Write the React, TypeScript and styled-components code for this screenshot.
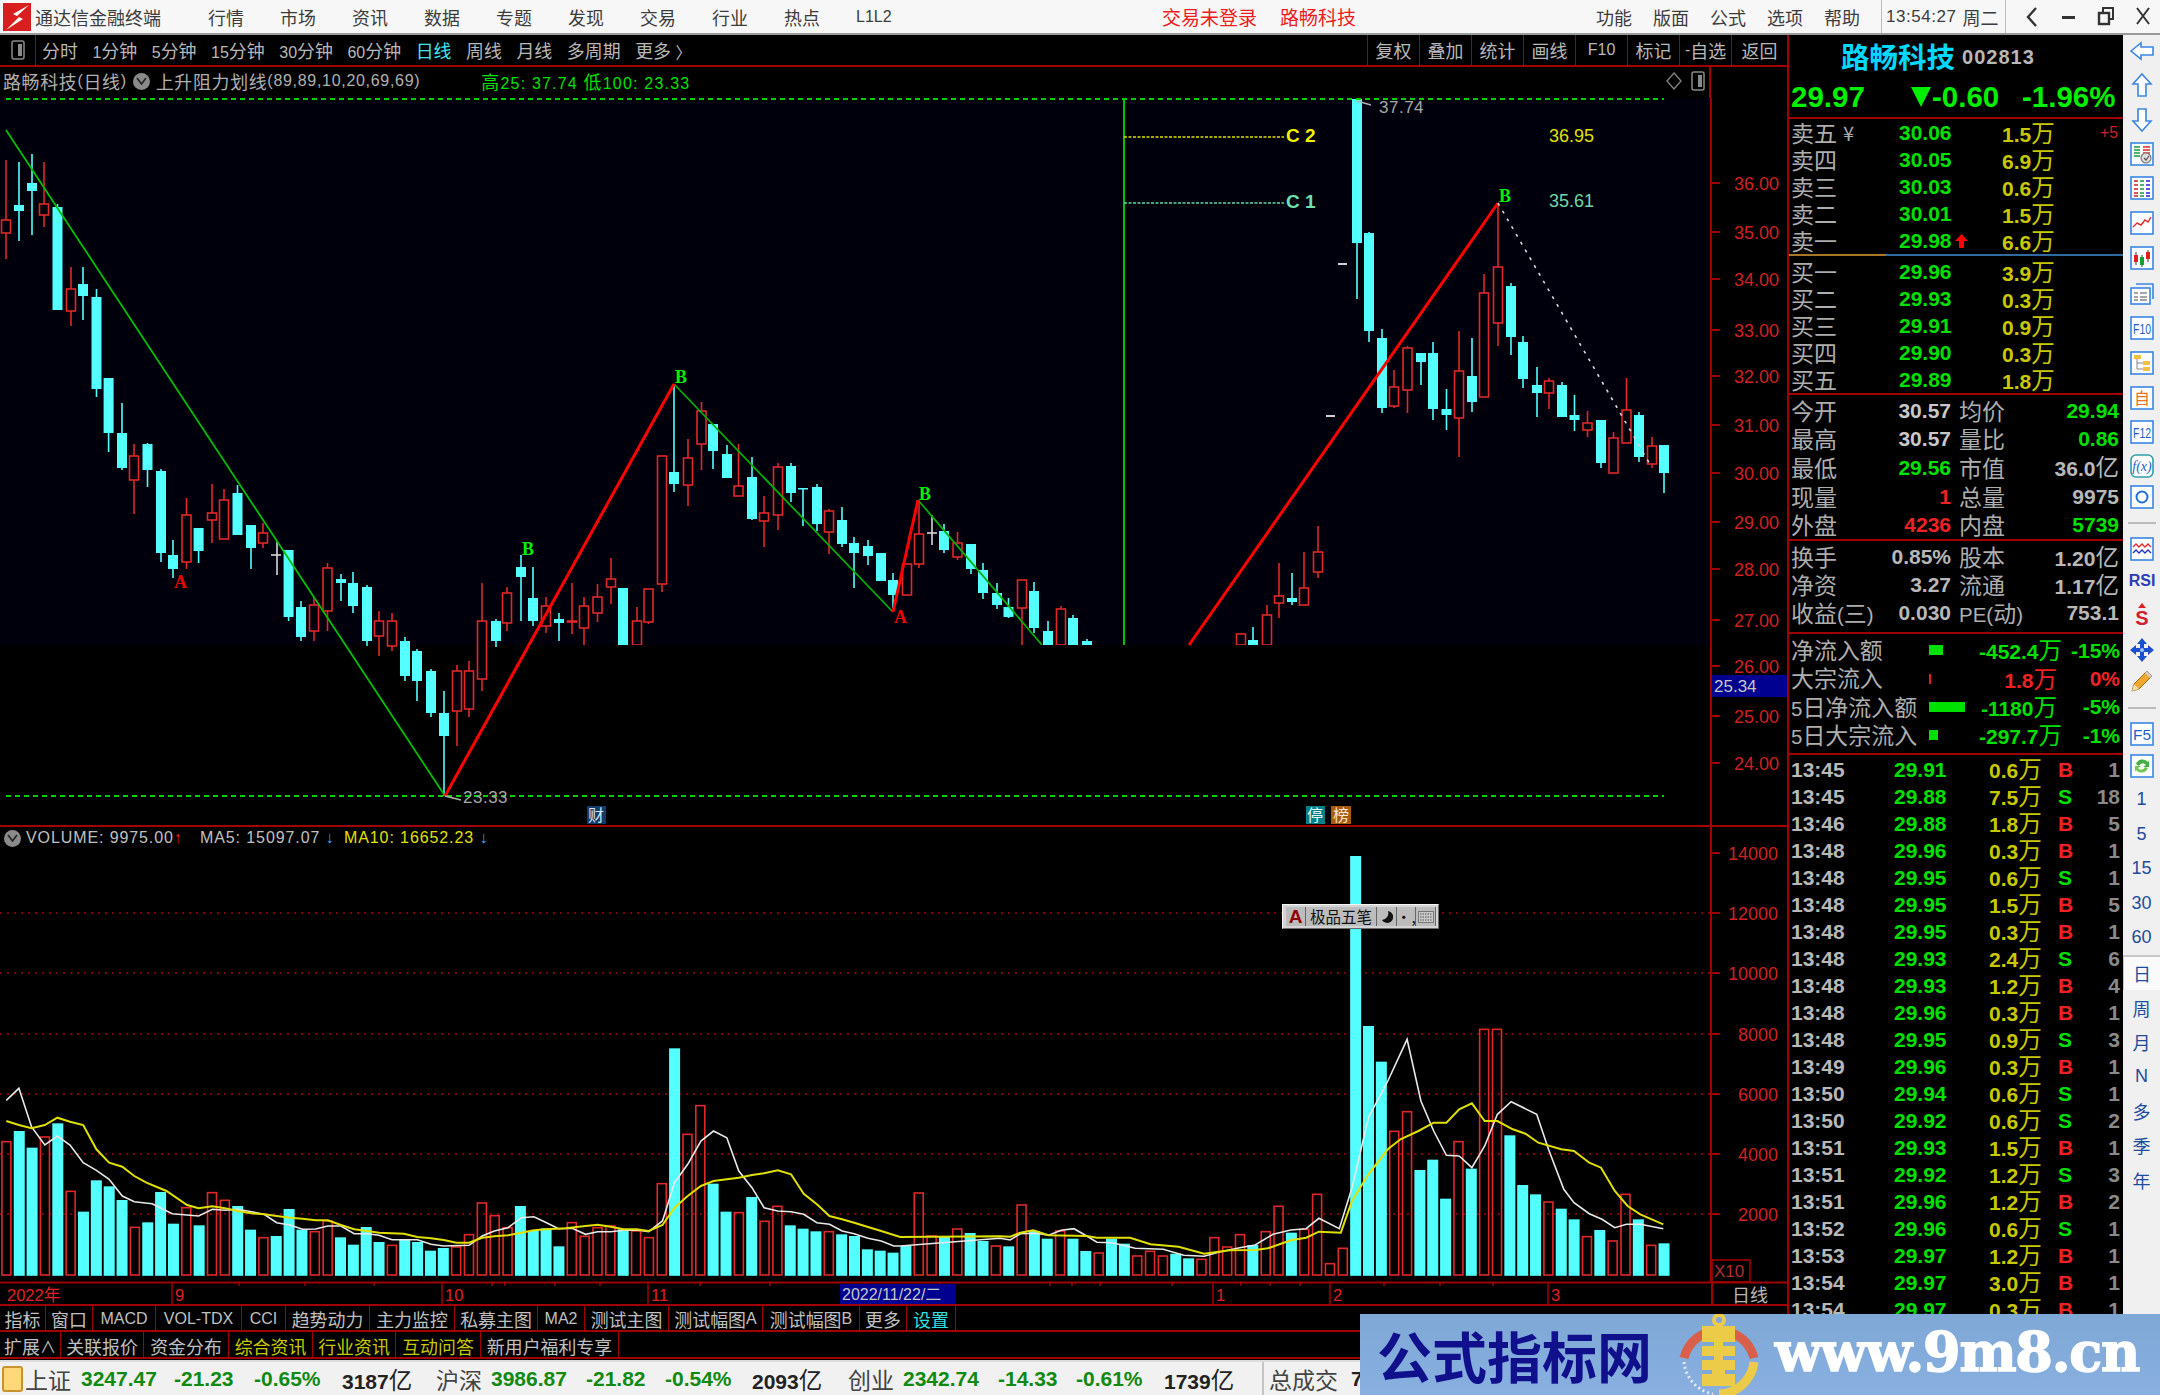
import React from "react";
import styled, { createGlobalStyle } from "styled-components";

const SANS = `"Liberation Sans", "Noto Sans CJK SC", sans-serif`;
const CJK = `"Noto Sans CJK SC", "Liberation Sans", sans-serif`;
const LINE = "#a00000";

const Global = createGlobalStyle`
  html, body { margin: 0; padding: 0; background: #000; }
  * { box-sizing: border-box; }
`;

const Root = styled.div`
  position: relative;
  width: 2160px;
  height: 1395px;
  overflow: hidden;
  background: #000;
  font-family: ${SANS};
  display: flex;
  flex-direction: column;
`;

const CjkSpan = styled.span`
  font-family: ${CJK};
  font-size: 1.12em;
  font-weight: 400;
`;

const Mix = ({ t }: { t: string }) => (
  <>
    {t.split(/([\u3000-\u9fff]+)/).map((p, i) =>
      /[\u3000-\u9fff]/.test(p) ? <CjkSpan key={i}>{p}</CjkSpan> : <span key={i}>{p}</span>
    )}
  </>
);

/* ---------- title bar ---------- */
const TitleBar = styled.div`
  height: 35px;
  flex: none;
  display: flex;
  align-items: center;
  background: #f7f7f7;
  border-bottom: 2px solid #9a9a9a;
  color: #3c3c3c;
  font-size: 16px;
`;
const LogoBox = styled.div`
  width: 35px;
  height: 33px;
  flex: none;
  display: flex;
  align-items: center;
  padding-left: 3px;
`;
const AppName = styled.div`
  width: 173px;
  font-family: ${CJK};
  font-size: 18px;
  flex: none;
`;
const MenuItem = styled.div`
  width: 72px;
  flex: none;
  white-space: nowrap;
`;
const AlertText = styled.div<{ $ml: number; $w: number }>`
  margin-left: ${(p) => p.$ml}px;
  width: ${(p) => p.$w}px;
  flex: none;
  color: #ee1c1c;
  font-family: ${CJK};
  font-size: 19px;
  white-space: nowrap;
`;
const RightMenu = styled.div`
  width: 57px;
  flex: none;
  font-family: ${CJK};
  font-size: 18px;
`;
const ClockCell = styled.div`
  width: 125px;
  height: 33px;
  flex: none;
  display: flex;
  align-items: center;
  gap: 6px;
  padding-left: 4px;
  border-left: 1px solid #bdbdbd;
  border-right: 1px solid #bdbdbd;
  font-size: 17px;
  letter-spacing: 0.55px;
  white-space: nowrap;
`;
const ClockDay = styled.span`
  font-family: ${CJK};
  font-size: 18px;
  letter-spacing: 0;
`;
const WinGroup = styled.div`
  display: flex;
  margin-left: 7px;
`;
const WinBtn = styled.div`
  width: 37px;
  flex: none;
  display: flex;
  justify-content: center;
`;

/* ---------- body ---------- */
const Body = styled.div`
  flex: none;
  height: 1325px;
  display: flex;
`;
const MainCol = styled.div`
  position: relative;
  width: 1787px;
  flex: none;
  display: flex;
  flex-direction: column;
`;
const Toolbar = styled.div`
  height: 32px;
  flex: none;
  display: flex;
  align-items: center;
  border-bottom: 2px solid ${LINE};
  color: #b8b8b8;
  font-size: 16px;
`;
const ToolIconCell = styled.div`
  width: 36px;
  height: 30px;
  flex: none;
  display: flex;
  align-items: center;
  justify-content: center;
  border-right: 1px solid ${LINE};
  margin-right: 6px;
`;
const PeriodList = styled.div`
  display: flex;
  gap: 14.6px;
  flex: 1;
  white-space: nowrap;
`;
const Period = styled.span<{ $on?: boolean }>`
  color: ${(p) => (p.$on ? "#3fe6f2" : "#b8b8b8")};
`;
const ToolBtn = styled.div<{ $w?: number }>`
  width: ${(p) => p.$w ?? 52}px;
  height: 30px;
  flex: none;
  display: flex;
  align-items: center;
  justify-content: center;
  border-left: 1px solid ${LINE};
  white-space: nowrap;
`;
const ChartHead = styled.div`
  height: 31px;
  width: 1711px;
  flex: none;
  display: flex;
  align-items: center;
  padding: 0 0 3px 3px;
  border-right: 2px solid ${LINE};
  color: #b0b0b0;
  font-size: 16px;
  letter-spacing: 0.7px;
  white-space: nowrap;
`;
const Circle = styled.span`
  width: 17px;
  height: 17px;
  border-radius: 50%;
  background: #8a8a8a;
  margin: 0 6px 0 6px;
  display: inline-flex;
  align-items: center;
  justify-content: center;
  flex: none;
`;
const HeadGreen = styled.span`
  margin-left: 61px;
  color: #00e000;
  flex: 1;
  letter-spacing: 1.2px;
`;
const HeadIcons = styled.div`
  display: flex;
  align-items: center;
  gap: 9px;
  padding-right: 4px;
`;
const ChartSvg = styled.svg`
  display: block;
  flex: none;
  overflow: visible;
  font-family: "Liberation Sans", sans-serif;
`;
const VolHead = styled.div`
  position: absolute;
  left: 4px;
  top: 794px;
  display: flex;
  align-items: center;
  color: #c0c0c0;
  font-size: 16px;
  letter-spacing: 0.9px;
  white-space: nowrap;
`;
const VolDot = styled.span`
  width: 17px;
  height: 17px;
  border-radius: 50%;
  background: #8a8a8a;
  margin-right: 5px;
  flex: none;
  display: flex;
  align-items: center;
  justify-content: center;
`;
const VolItem = styled.span<{ $w: number; $c?: string }>`
  width: ${(p) => p.$w}px;
  color: ${(p) => p.$c ?? "#c0c0c0"};
  flex: none;
`;
const DownMark = styled.span<{ $c: string }>`
  color: ${(p) => p.$c};
  font-weight: bold;
`;
const ImeBox = styled.div`
  position: absolute;
  left: 1282px;
  top: 869px;
  width: 157px;
  height: 25px;
  display: flex;
  padding: 2px 3px;
  background: #d4d4d4;
  border: 1px solid #f4f4f4;
  border-bottom-color: #6a6a6a;
  border-right-color: #6a6a6a;
  font-family: ${CJK};
  font-size: 15.5px;
  color: #111;
`;
const ImeBtn = styled.div<{ $w: number; $c?: string }>`
  width: ${(p) => p.$w}px;
  flex: none;
  display: flex;
  align-items: center;
  justify-content: center;
  background: #bcbcbc;
  border-right: 1px solid #666;
  color: ${(p) => p.$c ?? "#111"};
  line-height: 1;
  white-space: nowrap;
`;
const ImeLetter = styled.b`
  font-family: "Liberation Sans", sans-serif;
  font-size: 19px;
  font-weight: 700;
`;
const AxisRow = styled.div`
  height: 23px;
  flex: none;
  display: flex;
  border-bottom: 2px solid ${LINE};
`;
const PeriodCell = styled.div`
  width: 76px;
  flex: none;
  display: flex;
  align-items: center;
  justify-content: center;
  border-left: 2px solid ${LINE};
  color: #b8b8b8;
  font-family: ${CJK};
  font-size: 18px;
`;
const TabRow = styled.div<{ $h: number }>`
  height: ${(p) => p.$h}px;
  flex: none;
  display: flex;
  border-bottom: 2px solid ${LINE};
  font-size: 16px;
  color: #c0c0c0;
`;
const TabCell = styled.div<{ $w: number; $c?: string }>`
  width: ${(p) => p.$w}px;
  flex: none;
  display: flex;
  align-items: center;
  justify-content: center;
  padding-top: 2px;
  border-right: 1.5px solid ${LINE};
  color: ${(p) => p.$c ?? "#c0c0c0"};
  white-space: nowrap;
`;

/* ---------- quote panel ---------- */
const Quote = styled.div`
  width: 336px;
  flex: none;
  border-left: 2px solid ${LINE};
  display: flex;
  flex-direction: column;
  overflow: hidden;
  color: #b0b0b0;
`;
const NameRow = styled.div`
  height: 41px;
  flex: none;
  display: flex;
  align-items: center;
  padding-left: 52px;
  gap: 7px;
`;
const StockName = styled.div`
  font-family: ${CJK};
  font-weight: 700;
  font-size: 28.5px;
  color: #00d8ff;
`;
const StockCode = styled.div`
  font-weight: bold;
  font-size: 20px;
  letter-spacing: 1px;
  color: #b8b8b8;
  padding-top: 4px;
`;
const PriceRow = styled.div`
  height: 43px;
  flex: none;
  display: flex;
  align-items: center;
  color: #00f000;
  font-weight: bold;
  font-size: 29.5px;
  border-bottom: 2px solid ${LINE};
  padding-left: 2px;
  white-space: nowrap;
`;
const PriceCell = styled.div<{ $w: number }>`
  width: ${(p) => p.$w}px;
  flex: none;
  display: flex;
  align-items: center;
`;
const TriDown = styled.span`
  width: 0;
  height: 0;
  border-left: 10px solid transparent;
  border-right: 10px solid transparent;
  border-top: 20px solid #00f000;
  margin-right: 1px;
`;
const OrderRow = styled.div`
  height: 27px;
  flex: none;
  display: grid;
  grid-template-columns: 108px 52px 51px 98px 18px;
  align-items: center;
  padding-left: 2px;
  white-space: nowrap;
`;
const Label = styled.span`
  font-family: ${CJK};
  font-size: 23px;
  line-height: 1;
  color: #aeaeae;
  display: inline-flex;
  align-items: center;
  white-space: nowrap;
`;
const LabelMix = styled.span`
  font-size: 20.5px;
  line-height: 1;
  color: #aeaeae;
  font-weight: 400;
  white-space: nowrap;
`;
const Yen = styled.span`
  font-size: 20px;
  margin-left: 6px;
  color: #aaa;
`;
const Num = styled.span<{ $c?: string; $right?: boolean }>`
  font-size: 21px;
  line-height: 1;
  font-weight: bold;
  color: ${(p) => p.$c ?? "#c0c0c0"};
  text-align: ${(p) => (p.$right ? "right" : "left")};
  white-space: nowrap;
`;
const ArrowWrap = styled.span`
  display: flex;
  align-items: center;
  padding-left: 4px;
`;
const Plus = styled.span`
  color: #cc2222;
  font-size: 16px;
  text-align: right;
`;
const SplitLine = styled.div`
  height: 3px;
  flex: none;
  margin-bottom: 1px;
  background: linear-gradient(to right, #a87828 0 97px, #2f6aa0 97px);
  background-size: 100% 2px;
  background-repeat: no-repeat;
`;
const Section = styled.div<{ $pt?: number; $pb?: number; $top?: boolean }>`
  flex: none;
  padding-top: ${(p) => p.$pt ?? 0}px;
  padding-bottom: ${(p) => p.$pb ?? 0}px;
  border-bottom: 2px solid ${LINE};
  border-top: ${(p) => (p.$top ? `2px solid ${LINE}` : "0")};
`;
const StatRow = styled.div<{ $h: number }>`
  height: ${(p) => p.$h}px;
  display: grid;
  grid-template-columns: 60px 100px 72px 96px;
  align-items: center;
  padding-left: 2px;
  white-space: nowrap;
`;
const Label2 = styled(Label)`
  padding-left: 8px;
`;
const LabelMix2 = styled(LabelMix)`
  padding-left: 8px;
`;
const FlowRow = styled.div`
  height: 28.4px;
  display: grid;
  grid-template-columns: 138px 50px 78px 63px;
  align-items: center;
  padding-left: 2px;
  white-space: nowrap;
`;
const FlowBar = styled.div<{ $w: number; $c: string }>`
  width: ${(p) => p.$w}px;
  height: 10px;
  background: ${(p) => p.$c};
`;
const Ticks = styled.div`
  flex: 1;
  padding-top: 1px;
  overflow: hidden;
`;
const TickRow = styled.div`
  height: 27px;
  display: grid;
  grid-template-columns: 103px 95px 69px 20px 42px;
  align-items: center;
  padding-left: 2px;
`;

/* ---------- side bar ---------- */
const Side = styled.div`
  flex: 1;
  background: #f0f0f0;
  display: flex;
  flex-direction: column;
  align-items: center;
`;
const Slot = styled.div<{ $h: number; $on?: boolean }>`
  height: ${(p) => p.$h}px;
  width: 100%;
  flex: none;
  display: flex;
  align-items: center;
  justify-content: center;
  background: ${(p) => (p.$on ? "#fafafa" : "transparent")};
  border-top: ${(p) => (p.$on ? "2px solid #c8c8c8" : "0")};
  border-left: ${(p) => (p.$on ? "1px solid #c8c8c8" : "0")};
  color: #1d4c9e;
  font-size: 18px;
  font-family: ${SANS};
`;
const SideRule = styled.div`
  width: 28px;
  height: 2px;
  background: #bcbcbc;
`;

/* ---------- status bar ---------- */
const Status = styled.div`
  flex: 1;
  display: flex;
  align-items: center;
  background: #f1f1f1;
  border-top: 2px solid #dcdcdc;
  white-space: nowrap;
`;
const StatusLamp = styled.div`
  width: 21px;
  height: 26px;
  margin: 0 2px;
  flex: none;
  border: 2px solid #c8922c;
  border-radius: 3px;
  background: #ffd87a;
`;
const StatusCell = styled.div<{ $w: number; $c?: string }>`
  width: ${(p) => p.$w}px;
  flex: none;
  font-size: 21px;
  font-weight: 700;
  color: ${(p) => p.$c ?? "#333"};
`;
const StatusLabel = styled.span`
  font-family: ${CJK};
  font-size: 23px;
  font-weight: 400;
  color: #444;
`;
const StatusDiv = styled.div`
  height: 34px;
  width: 2px;
  background: #c4c4c4;
  flex: none;
  margin-right: 5px;
`;

/* ---------- watermark ---------- */
const Mark = styled.div`
  position: absolute;
  left: 1360px;
  top: 1314px;
  width: 800px;
  height: 81px;
  background: linear-gradient(#7ea8d6, #88afe0);
  display: flex;
  align-items: center;
  overflow: hidden;
`;
const MarkTitle = styled.div`
  font-family: ${CJK};
  font-weight: 700;
  font-size: 55px;
  line-height: 1;
  color: #10108c;
  margin-left: 17px;
  width: 277px;
  flex: none;
`;
const MarkLogo = styled.svg`
  flex: none;
  margin-left: 24px;
`;
const MarkUrl = styled.div`
  font-family: "DejaVu Serif", serif;
  font-weight: 700;
  font-size: 54px;
  line-height: 1;
  letter-spacing: -1.2px;
  color: #fff;
  margin-left: 15px;
  margin-top: -6px;
  -webkit-text-stroke: 1.5px #fff;
  white-space: nowrap;
`;

/* ---------- data ---------- */
type C = ["r" | "c", number, number, number, number, number];
const CANDLES: C[] = [
  ["r", 6, 219, 232, 159, 258], ["c", 19, 204, 210, 161, 240], ["c", 32, 182, 190, 153, 234], ["r", 44, 203, 214, 161, 226],
  ["c", 57.5, 206, 309, 203, 309], ["r", 71, 288, 310, 266, 325], ["c", 83, 283, 295, 266, 319], ["c", 96.5, 296, 388, 288, 396],
  ["c", 108.6, 377, 432, 377, 451], ["c", 122, 432, 467, 402, 469], ["r", 134, 455, 479, 443, 513], ["c", 147.5, 443, 469, 442, 486],
  ["c", 161, 470, 552, 468, 561], ["c", 173, 554, 568, 539, 577], ["r", 186.5, 514, 561, 497, 568], ["c", 198.6, 527, 550, 527, 562],
  ["r", 212, 512, 519, 483, 542], ["r", 224, 499, 538, 488, 538], ["c", 237.5, 492, 534, 484, 534], ["c", 251, 524, 547, 524, 568],
  ["r", 263, 532, 542, 522, 547], ["c", 288.6, 549, 616, 549, 620], ["c", 301, 606, 636, 600, 640], ["r", 314, 604, 630, 596, 640],
  ["r", 327.5, 567, 610, 562, 630], ["c", 341, 578, 582, 573, 600], ["c", 353, 582, 605, 571, 612], ["c", 367, 586, 640, 584, 645],
  ["r", 379, 620, 635, 610, 655], ["r", 392, 620, 645, 612, 650], ["c", 405, 640, 675, 636, 680], ["c", 417, 650, 680, 648, 700],
  ["c", 431, 670, 712, 668, 716], ["c", 444, 712, 735, 690, 795], ["r", 457, 670, 710, 664, 745], ["r", 469, 670, 708, 660, 716],
  ["r", 482, 620, 678, 582, 690], ["c", 496, 620, 640, 618, 646], ["r", 507, 592, 622, 586, 630], ["c", 521, 566, 576, 554, 620],
  ["c", 533, 597, 620, 566, 625], ["r", 546, 605, 625, 596, 632], ["c", 559, 618, 622, 612, 640],
  ["r", 572, 620, 621, 582, 633], ["r", 584, 605, 627, 596, 644], ["r", 597.5, 596, 612, 583, 621], ["r", 611, 578, 586, 557, 603],
  ["c", 623, 587, 644, 587, 644], ["r", 637, 620, 644, 606, 644], ["r", 648.5, 588, 621, 588, 623], ["r", 662, 455, 583, 455, 591],
  ["c", 674, 471, 483, 383, 491], ["r", 688, 457, 484, 438, 505], ["r", 701.5, 410, 443, 401, 469], ["c", 713, 423, 450, 423, 468],
  ["c", 727, 453, 477, 444, 477], ["r", 738.5, 485, 495, 443, 495], ["c", 752, 476, 518, 456, 519], ["r", 764, 512, 520, 495, 546],
  ["r", 778, 466, 514, 462, 529], ["c", 791, 465, 492, 462, 501], ["c", 803, 487, 488, 487, 525], ["c", 817, 486, 523, 483, 530],
  ["r", 829, 510, 531, 508, 553], ["c", 842, 519, 543, 506, 546], ["c", 854, 542, 552, 536, 587], ["c", 868, 545, 555, 539, 564],
  ["c", 881, 552, 580, 552, 580], ["c", 893, 579, 594, 572, 607], ["r", 907, 563, 594, 563, 594], ["r", 919, 533, 563, 500, 567],
  ["c", 944, 530, 549, 523, 552], ["r", 957.5, 542, 556, 531, 559], ["c", 971, 543, 568, 543, 573], ["c", 983, 569, 592, 562, 598],
  ["c", 997, 592, 604, 582, 608], ["c", 1008.5, 606, 616, 597, 617], ["r", 1022, 579, 607, 579, 644], ["c", 1034, 590, 627, 581, 632],
  ["c", 1048, 630, 644, 620, 644], ["r", 1061, 608, 644, 605, 644], ["c", 1073, 617, 644, 614, 644], ["c", 1087, 640, 644, 638, 644],
  ["r", 1241, 633, 644, 633, 644], ["c", 1253, 639, 644, 626, 644], ["r", 1267, 614, 644, 604, 644], ["r", 1279, 595, 602, 562, 617],
  ["c", 1292, 597, 601, 572, 604], ["r", 1304, 587, 604, 551, 604], ["r", 1318, 551, 571, 525, 577],
  ["c", 1357, 98, 242, 98, 298], ["c", 1369, 232, 330, 231, 341], ["c", 1382, 337, 407, 328, 412], ["r", 1394, 386, 405, 369, 407],
  ["r", 1407.5, 347, 389, 345, 412], ["c", 1421, 352, 361, 352, 384], ["c", 1433, 352, 408, 341, 419], ["c", 1446.5, 408, 414, 388, 429],
  ["r", 1459, 370, 417, 330, 456], ["c", 1472, 375, 401, 337, 411], ["r", 1484, 292, 396, 273, 396], ["r", 1498, 266, 322, 202, 345],
  ["c", 1511, 285, 336, 282, 354], ["c", 1523, 341, 378, 335, 387], ["c", 1537, 384, 392, 366, 416], ["r", 1549, 380, 392, 377, 408],
  ["c", 1562, 384, 416, 381, 416], ["c", 1574.5, 414, 419, 394, 430], ["r", 1587.5, 422, 429, 410, 436], ["c", 1601, 419, 462, 419, 467],
  ["r", 1613.5, 437, 472, 431, 472], ["r", 1626.5, 409, 442, 377, 442], ["c", 1639, 414, 456, 411, 461], ["r", 1652, 445, 463, 436, 467],
  ["c", 1664, 444, 472, 444, 492],
];

const PRICE_AXIS = [
  ["36.00", 182], ["35.00", 231], ["34.00", 278], ["33.00", 329], ["32.00", 375], ["31.00", 424], ["30.00", 472],
  ["29.00", 521], ["28.00", 568], ["27.00", 619], ["26.00", 665], ["25.00", 715], ["24.00", 762],
] as [string, number][];

const V1: [string, number][] = [
  ["r", 422], ["c", 390], ["c", 440], ["r", 408], ["c", 367], ["r", 571], ["c", 632], ["c", 538], ["c", 556], ["c", 597], ["r", 679], ["c", 664], ["c", 573], ["c", 668], ["r", 620], ["c", 673], ["r", 575], ["r", 598], ["c", 615], ["c", 686], ["r", 710], ["c", 705], ["c", 624], ["c", 686], ["r", 692], ["r", 660], ["c", 709], ["c", 731], ["c", 678], ["c", 723], ["r", 733], ["c", 716], ["c", 723], ["c", 749], ["c", 741], ["r", 738], ["r", 701], ["r", 606], ["r", 644], ["r", 680], ["c", 615], ["c", 690], ["c", 682], ["c", 736], ["r", 665], ["r", 706], ["r", 680], ["r", 675], ["c", 685], ["r", 690], ["r", 710], ["r", 548], ["c", 142], ["r", 400], ["r", 314], ["c", 548], ["c", 632], ["r", 635], ["c", 588], ["r", 661], ["r", 616], ["c", 673], ["c", 683], ["c", 691], ["r", 692], ["c", 700], ["c", 705], ["c", 745], ["c", 749], ["c", 755],
];
const VFill: [string, number][] = [["c", 1245], ["r", 1192], ["r", 1235], ["c", 1235], ["r", 1228], ["c", 1232], ["c", 1240], ["r", 1245]];
const V2: [string, number][] = [
  ["c", 1276], ["r", 1152], ["c", 1230], ["c", 1253], ["r", 1230], ["c", 1253], ["c", 1290], ["r", 1296], ["c", 1253], ["c", 1268], ["r", 1305], ["r", 1291], ["r", 1305], ["c", 1298], ["c", 1312], ["r", 1315], ["r", 1250], ["r", 1278], ["r", 1241], ["c", 1272], ["r", 1232], ["r", 1156], ["c", 1235], ["r", 1225], ["r", 1120], ["r", 1328], ["r", 1282], ["c", 105], ["c", 615], ["c", 722], ["r", 931], ["r", 872], ["c", 1047], ["c", 1016], ["c", 1133], ["r", 962], ["c", 1043], ["r", 625], ["r", 625], ["c", 943], ["c", 1092], ["c", 1120], ["r", 1143], ["c", 1163], ["c", 1195], ["r", 1247], ["c", 1227], ["r", 1260], ["r", 1120], ["c", 1195], ["r", 1273], ["c", 1267],
];
const BARS: [string, number][] = [
  ...V1.map(([k, y]) => [k, 1000 + y / 3] as [string, number]),
  ...VFill,
  ...V2.map(([k, y]) => [k, 820 + y / 3] as [string, number]),
];

const W1 = [11,298,33,262,55,378,78,432,100,405,122,432,145,485,168,508,190,535,213,585,234,602,265,608,300,638,346,645,370,625,392,628,414,625,438,632,460,640,482,665,505,672,527,685,550,684,571,675,594,675,617,698,640,698,660,703,683,716,727,716,751,730,773,735,817,733,840,705,861,690,885,680,908,650,930,647,952,665,973,683,997,682,1020,700,1041,692,1064,692,1086,688,1109,687,1130,692,1154,660,1175,545,1198,490,1221,420,1243,390,1266,410,1287,510,1310,560,1331,620,1355,630,1378,632,1400,640,1423,665,1445,670,1467,690,1488,698,1512,712,1535,720,1557,735,1568,735];
const Y1 = [11,360,33,372,55,382,78,372,100,350,122,362,145,372,168,445,190,485,213,497,234,525,255,545,290,570,326,612,346,622,370,616,392,622,414,630,438,637,460,640,482,645,505,650,527,653,550,658,571,658,594,672,617,685,640,690,660,695,704,698,727,708,751,712,773,717,795,725,817,725,840,710,861,706,885,703,908,695,930,688,952,685,985,682,1020,675,1041,671,1064,677,1086,685,1109,685,1130,690,1154,672,1175,620,1198,585,1221,555,1243,540,1266,535,1287,530,1310,522,1331,517,1355,508,1378,520,1400,578,1423,610,1445,645,1467,655,1488,665,1512,678,1535,690,1568,708];
const W2 = [0,1252,20,1257,40,1238,70,1237,95,1243,120,1228,145,1223,170,1245,190,1264,220,1265,265,1282,320,1285,360,1303,400,1306,430,1293,470,1280,500,1272,535,1240,570,1227,600,1223,625,1192,665,1223,690,1100,722,890,760,780,798,655,825,840,850,930,875,1003,900,1005,925,1040,950,975,975,880,1002,842,1052,880,1075,985,1105,1105,1125,1145,1155,1178,1180,1195,1205,1220,1228,1210,1255,1210,1300,1223];
const Y2 = [0,1246,20,1247,40,1235,65,1228,95,1243,170,1245,190,1250,255,1250,295,1270,350,1277,400,1298,450,1288,500,1287,525,1282,570,1258,600,1250,625,1232,668,1235,690,1140,722,1060,760,985,785,955,820,930,850,905,875,905,900,865,925,847,950,900,975,900,1005,925,1030,938,1055,965,1100,985,1125,990,1155,1025,1178,1040,1205,1110,1230,1155,1255,1180,1300,1210];
const pts = (a: number[], sx: number, ox: number, oy: number) => {
  const r: string[] = [];
  for (let i = 0; i < a.length; i += 2) r.push(`${(ox + a[i] / sx).toFixed(1)},${(oy + a[i + 1] / 3).toFixed(1)}`);
  return r.join(" ");
};
const MA5 = pts(W1, 1.742, 0, 1000) + " " + pts(W2, 1.96, 1000, 820);
const MA10 = pts(Y1, 1.742, 0, 1000) + " " + pts(Y2, 1.96, 1000, 820);

const TICKS: [string, string, string, string, string][] = [
  ["13:45", "29.91", "0.6", "B", "1"], ["13:45", "29.88", "7.5", "S", "18"], ["13:46", "29.88", "1.8", "B", "5"],
  ["13:48", "29.96", "0.3", "B", "1"], ["13:48", "29.95", "0.6", "S", "1"], ["13:48", "29.95", "1.5", "B", "5"],
  ["13:48", "29.95", "0.3", "B", "1"], ["13:48", "29.93", "2.4", "S", "6"], ["13:48", "29.93", "1.2", "B", "4"],
  ["13:48", "29.96", "0.3", "B", "1"], ["13:48", "29.95", "0.9", "S", "3"], ["13:49", "29.96", "0.3", "B", "1"],
  ["13:50", "29.94", "0.6", "S", "1"], ["13:50", "29.92", "0.6", "S", "2"], ["13:51", "29.93", "1.5", "B", "1"],
  ["13:51", "29.92", "1.2", "S", "3"], ["13:51", "29.96", "1.2", "B", "2"], ["13:52", "29.96", "0.6", "S", "1"],
  ["13:53", "29.97", "1.2", "B", "1"], ["13:54", "29.97", "3.0", "B", "1"], ["13:54", "29.97", "0.3", "B", "1"],
];

const GREEN = "#00e000";
const YEL = "#c8c800";
const RED = "#ee2222";
const NAVY = "#00000c";

/* ---------- charts ---------- */
const PriceChart = () => (
  <ChartSvg width={1787} height={729} viewBox="0 97 1787 729">
    <rect x="0" y="97" width="1711" height="547" fill={NAVY} />
    {CANDLES.map(([k, x, t, b, hi, lo], i) => {
      const col = k === "r" ? "#e02828" : "#54ffff";
      return (
        <g key={i}>
          <line x1={x} x2={x} y1={hi} y2={lo} stroke={col} strokeWidth={1.6} />
          {k === "r" ? (
            <rect x={x - 4.5} y={t} width={9} height={b - t} fill={NAVY} stroke={col} strokeWidth={1.6} />
          ) : (
            <rect x={x - 5} y={t} width={10} height={Math.max(b - t, 1.5)} fill={col} />
          )}
        </g>
      );
    })}
    <line x1={277} x2={277} y1={540} y2={574} stroke="#d8d8d8" strokeWidth={1.6} />
    <line x1={271} x2={281} y1={554} y2={554} stroke="#d8d8d8" strokeWidth={1.6} />
    <line x1={932} x2={932} y1={514} y2={544} stroke="#d8d8d8" strokeWidth={1.6} />
    <line x1={927} x2={937} y1={532} y2={532} stroke="#d8d8d8" strokeWidth={1.6} />
    <rect x={1338} y={262} width={9} height={2} fill="#d0d0d0" />
    <rect x={1326} y={414} width={9} height={2} fill="#d0d0d0" />
    <polyline points="6,129 445,795" fill="none" stroke="#00c000" strokeWidth={1.8} />
    <polyline points="674,383 893,611" fill="none" stroke="#00b000" strokeWidth={1.8} />
    <polyline points="918,499 1042,644" fill="none" stroke="#00b000" strokeWidth={1.8} />
    <polyline points="445,795 674,383" fill="none" stroke="#ff0000" strokeWidth={3} />
    <polyline points="893,611 918,499" fill="none" stroke="#ff0000" strokeWidth={3} />
    <rect x={530} y={644} width={1180} height={181} fill="#000" />
    <polyline points="1189,644 1498,202" fill="none" stroke="#ff0000" strokeWidth={3} />
    <line x1={1498} y1={202} x2={1651} y2={465} stroke="#d8d8d8" strokeWidth={1.6} strokeDasharray="3 6" />
    <line x1={1124} x2={1124} y1={98} y2={644} stroke="#00c000" strokeWidth={2} />
    <line x1={6} x2={1664} y1={98} y2={98} stroke="#00d000" strokeWidth={2} strokeDasharray="5 4" />
    <line x1={6} x2={1664} y1={795} y2={795} stroke="#00d000" strokeWidth={2} strokeDasharray="5 4" />
    <line x1={1124} x2={1284} y1={136} y2={136} stroke="#e0e000" strokeWidth={1.6} strokeDasharray="3 1.5" />
    <line x1={1124} x2={1284} y1={202} y2={202} stroke="#60d8a8" strokeWidth={1.6} strokeDasharray="3 1.5" />
    <text x={1286} y={141} fontSize={19} fontWeight="bold" fill="#f0f000">C 2</text>
    <text x={1286} y={207} fontSize={19} fontWeight="bold" fill="#70e0b0">C 1</text>
    <text x={1549} y={141} fontSize={18} fill="#e0e000">36.95</text>
    <text x={1549} y={206} fontSize={18} fill="#70d8a8">35.61</text>
    <g fontFamily="'Liberation Serif', serif" fontWeight="bold" fontSize={18}>
      <text x={174} y={587} fill="#f00000">A</text>
      <text x={522} y={554} fill="#00f000">B</text>
      <text x={675} y={382} fill="#00f000">B</text>
      <text x={894} y={622} fill="#f00000">A</text>
      <text x={919} y={499} fill="#00f000">B</text>
      <text x={1499} y={201} fill="#00f000">B</text>
    </g>
    <polyline points="1357,100 1371,104" fill="none" stroke="#b0b0b0" strokeWidth={1.4} />
    <text x={1379} y={112} fontSize={17} letterSpacing={0.5} fill="#a8a8a8">37.74</text>
    <polyline points="445,795 461,799" fill="none" stroke="#b0b0b0" strokeWidth={1.4} />
    <text x={463} y={802} fontSize={17} letterSpacing={0.5} fill="#a8a8a8">23.33</text>
    <g fontFamily="'Noto Sans CJK SC', sans-serif" fontSize={16}>
      <rect x={587} y={805} width={19} height={18} fill="#123a6a" />
      <text x={588} y={820} fill="#d8e4f4">财</text>
      <rect x={1306} y={805} width={19} height={18} fill="#008088" />
      <text x={1307} y={820} fill="#e8f8f8">停</text>
      <rect x={1331} y={805} width={20} height={18} fill="#a85a10" />
      <text x={1333} y={820} fill="#f8e8d8">榜</text>
    </g>
    <line x1={1711} x2={1711} y1={97} y2={826} stroke={LINE} strokeWidth={2} />
    <rect x={1712} y={674} width={75} height={22} fill="#000090" />
    <text x={1714} y={691} fontSize={17} fill="#c8c8c8">25.34</text>
    {PRICE_AXIS.map(([t, y]) => (
      <g key={t}>
        <line x1={1711} x2={1720} y1={y} y2={y} stroke={LINE} strokeWidth={2} />
        <text x={1734} y={y + 7} fontSize={18} fill="#d02020">{t}</text>
      </g>
    ))}
    <line x1={0} x2={1787} y1={825} y2={825} stroke={LINE} strokeWidth={2} />
  </ChartSvg>
);

const VOL_AXIS = [["14000", 852], ["12000", 912], ["10000", 972], ["8000", 1033], ["6000", 1093], ["4000", 1153], ["2000", 1213]] as [string, number][];

const VolumeChart = () => (
  <ChartSvg width={1787} height={456} viewBox="0 826 1787 456">
    {VOL_AXIS.slice(1).map(([t, y]) => (
      <line key={t} x1={0} x2={1711} y1={y} y2={y} stroke="#a00000" strokeWidth={1.6} strokeDasharray="2 5" />
    ))}
    {BARS.map(([k, y], i) => {
      const x = 6.4 + i * 12.85;
      return k === "r" ? (
        <rect key={i} x={x - 4.5} y={y} width={9} height={1274 - y} fill="none" stroke="#e02828" strokeWidth={1.6} />
      ) : (
        <rect key={i} x={x - 5.5} y={y} width={11} height={1274.8 - y} fill="#54ffff" />
      );
    })}
    <polyline points={MA5} fill="none" stroke="#e8e8e8" strokeWidth={1.6} />
    <polyline points={MA10} fill="none" stroke="#e0e000" strokeWidth={2} />
    <line x1={1711} x2={1711} y1={826} y2={1282} stroke={LINE} strokeWidth={2} />
    {VOL_AXIS.map(([t, y]) => (
      <g key={t}>
        <line x1={1711} x2={1720} y1={y} y2={y} stroke={LINE} strokeWidth={2} />
        <text x={1778} y={y + 7} fontSize={18} textAnchor="end" fill="#d02020">{t}</text>
      </g>
    ))}
    <rect x={1712} y={1259} width={38} height={22} fill="none" stroke={LINE} strokeWidth={1.6} />
    <text x={1714} y={1276} fontSize={17} fill="#b03030">X10</text>
    <line x1={0} x2={1787} y1={1281.5} y2={1281.5} stroke={LINE} strokeWidth={2} />
  </ChartSvg>
);

const DateAxis = () => (
  <ChartSvg width={1711} height={21} viewBox="0 1283 1711 21">
    {[239, 305, 374, 492, 505, 555, 600, 700, 770, 866, 940, 1050, 1072, 1100, 1172, 1241, 1270, 1300, 1384, 1440, 1493].map((x) => (
      <line key={x} x1={x} x2={x} y1={1283} y2={1286} stroke={LINE} strokeWidth={1.5} />
    ))}
    {[172, 442, 648, 1213, 1330, 1548].map((x) => (
      <line key={x} x1={x} x2={x} y1={1283} y2={1304} stroke={LINE} strokeWidth={1.5} />
    ))}
    <rect x={840} y={1284} width={116} height={20} fill="#000090" />
    <text x={7} y={1301} fontSize={16.5} fill="#e02020">2022<tspan fontFamily="'Noto Sans CJK SC', sans-serif" fontSize={17}>年</tspan></text>
    <text x={175} y={1301} fontSize={16.5} fill="#e02020">9</text>
    <text x={445} y={1301} fontSize={16.5} fill="#e02020">10</text>
    <text x={651} y={1301} fontSize={16.5} fill="#e02020">11</text>
    <text x={842} y={1300} fontSize={16} fill="#c8c8c8">2022/11/22/<tspan fontFamily="'Noto Sans CJK SC', sans-serif" fontSize={16}>二</tspan></text>
    <text x={1216} y={1301} fontSize={16.5} fill="#e02020">1</text>
    <text x={1333} y={1301} fontSize={16.5} fill="#e02020">2</text>
    <text x={1551} y={1301} fontSize={16.5} fill="#e02020">3</text>
  </ChartSvg>
);

/* ---------- side icons ---------- */
const B = "#3a86e4";
const Frame = ({ children }: { children?: React.ReactNode }) => (
  <svg width="24" height="24" viewBox="0 0 24 24">
    <rect x="1" y="1" width="22" height="22" fill="#fff" stroke={B} strokeWidth="1.6" />
    {children}
  </svg>
);
const Free = ({ children }: { children?: React.ReactNode }) => (
  <svg width="26" height="26" viewBox="0 0 26 26">{children}</svg>
);
const FrameText = ({ t, c = "#1c5fc8", s = 15 }: { t: string; c?: string; s?: number }) => (
  <text x="12" y="17.5" fontSize={s} fontFamily="'Liberation Sans', sans-serif" textAnchor="middle" textLength={18} lengthAdjust="spacingAndGlyphs" fill={c}>{t}</text>
);

const ICONS: Record<string, React.ReactNode> = {
  left: <Free><path d="M2 13 L12 5 V9 H24 V17 H12 V21 Z" fill="#fff" stroke={B} strokeWidth="1.6" /></Free>,
  up: <Free><path d="M13 2 L22 12 H17 V24 H9 V12 H4 Z" fill="#fff" stroke={B} strokeWidth="1.6" /></Free>,
  down: <Free><path d="M13 24 L22 14 H17 V2 H9 V14 H4 Z" fill="#fff" stroke={B} strokeWidth="1.6" /></Free>,
  table: (
    <Frame>
      <path d="M4 5h6M4 8h6M4 11h6M4 14h6" stroke="#1a9a3a" strokeWidth="1.4" />
      <path d="M13 5h7M13 8h7M13 11h7" stroke="#e02828" strokeWidth="1.4" />
      <circle cx="16" cy="16" r="5" fill="#ddd" stroke="#777" strokeWidth="1.2" />
      <path d="M14 16l2 2 3-4" stroke="#555" strokeWidth="1.2" fill="none" />
    </Frame>
  ),
  grid: (
    <Frame>
      <path d="M4 5h4M4 9h4M4 13h4M4 17h4M4 20h4" stroke="#d02020" strokeWidth="1.6" />
      <path d="M10 5h4M10 9h4M10 13h4M10 17h4M10 20h4" stroke="#1a9a3a" strokeWidth="1.6" />
      <path d="M16 5h4M16 9h4M16 13h4M16 17h4M16 20h4" stroke="#2020d0" strokeWidth="1.6" />
    </Frame>
  ),
  line: <Frame><polyline points="3,16 7,12 11,14 15,9 18,11 21,6" fill="none" stroke="#e02828" strokeWidth="1.4" /></Frame>,
  candle: (
    <Frame>
      <path d="M6 6v13M12 9v12M18 4v12" stroke="#333" strokeWidth="1" />
      <rect x="4" y="9" width="4" height="7" fill="#e02020" />
      <rect x="10" y="11" width="4" height="8" fill="#12a030" />
      <rect x="16" y="6" width="4" height="7" fill="#e02020" />
    </Frame>
  ),
  windows: (
    <Free>
      <path d="M7 4h17v15" fill="none" stroke={B} strokeWidth="1.6" />
      <rect x="2" y="8" width="19" height="16" fill="#fff" stroke={B} strokeWidth="1.6" />
      <path d="M5 13h4M11 13h7M5 17h4M11 17h7M5 20h4M11 20h7" stroke="#888" strokeWidth="1.3" />
    </Free>
  ),
  f10: <Frame><FrameText t="F10" /></Frame>,
  tree: (
    <Frame>
      <rect x="4" y="4" width="7" height="4" fill="#f2c040" />
      <rect x="13" y="10" width="7" height="4" fill="#f2c040" />
      <rect x="13" y="16" width="7" height="4" fill="#f2c040" />
      <path d="M7 8v10h6M7 12h6" stroke="#888" fill="none" />
    </Frame>
  ),
  zi: <Frame><text x="12" y="18" fontSize="16" textAnchor="middle" fontFamily="'Noto Sans CJK SC', sans-serif" fill="#f07020">自</text></Frame>,
  f12: <Frame><FrameText t="F12" /></Frame>,
  fx: (
    <svg width="24" height="24" viewBox="0 0 24 24">
      <rect x="1" y="1" width="22" height="22" rx="5" fill="#fff" stroke="#2ea0a8" strokeWidth="1.6" />
      <text x="12" y="17" fontSize="14" fontStyle="italic" textAnchor="middle" fontFamily="'Liberation Serif', serif" fill="#1c5fc8">f(x)</text>
    </svg>
  ),
  ring: <Frame><circle cx="12" cy="12" r="5.5" fill="none" stroke="#1c6fd8" strokeWidth="2" /></Frame>,
  wave: (
    <Frame>
      <polyline points="3,10 6,7 9,10 12,7 15,10 18,7 21,10" fill="none" stroke="#e02828" strokeWidth="1.3" />
      <polyline points="3,16 6,13 9,16 12,13 15,16 18,13 21,16" fill="none" stroke="#2030c8" strokeWidth="1.3" />
    </Frame>
  ),
  rsi: <Free><text x="13" y="19" fontSize="16" fontWeight="bold" textAnchor="middle" fontFamily="'Liberation Sans', sans-serif" fill="#2a3cb8">RSI</text></Free>,
  s: (
    <Free>
      <path d="M13 1l4 5h-8z" fill="#e02020" />
      <text x="13" y="23" fontSize="20" fontWeight="bold" textAnchor="middle" fontFamily="'Liberation Sans', sans-serif" fill="#d02030">S</text>
    </Free>
  ),
  move: (
    <Free>
      <path d="M13 1l5 6h-3v4h4V8l6 5-6 5v-3h-4v4h3l-5 6-5-6h3v-4H7v3l-6-5 6-5v3h4V7H8z" fill="#1a50d0" />
      <circle cx="13" cy="13" r="2" fill="#9fc4f4" />
    </Free>
  ),
  pencil: (
    <Free>
      <path d="M3 23l2-7L18 3l5 5L10 21z" fill="#f0a830" stroke="#a06a10" strokeWidth="1" />
      <path d="M3 23l2-7 5 5z" fill="#f0dcb0" />
      <path d="M18 3l5 5-2 2-5-5z" fill="#d0d0d0" />
    </Free>
  ),
  f5: <Frame><FrameText t="F5" /></Frame>,
  refresh: (
    <Frame>
      <path d="M6 10a7 7 0 0 1 12-2l1-2v7h-6l3-2a4 4 0 0 0-7 1z" fill="#40b040" />
      <path d="M18 14a7 7 0 0 1-12 2l-1 2v-6h6l-3 2a4 4 0 0 0 7-1z" fill="#70c850" />
    </Frame>
  ),
};

type SideDef = { c: number; icon?: string; text?: string; rule?: boolean; on?: boolean };
const SIDE: SideDef[] = [
  { c: 51, icon: "left" }, { c: 84, icon: "up" }, { c: 121, icon: "down" }, { c: 153, icon: "table" }, { c: 188, icon: "grid" },
  { c: 223, icon: "line" }, { c: 257, icon: "candle" }, { c: 293, icon: "windows" }, { c: 328, icon: "f10" }, { c: 362, icon: "tree" },
  { c: 398, icon: "zi" }, { c: 432, icon: "f12" }, { c: 466, icon: "fx" }, { c: 499, icon: "ring" }, { c: 523, rule: true },
  { c: 546, icon: "wave" }, { c: 580, icon: "rsi" }, { c: 615, icon: "s" }, { c: 650, icon: "move" }, { c: 684, icon: "pencil" },
  { c: 707, rule: true }, { c: 732, icon: "f5" }, { c: 765, icon: "refresh" }, { c: 800, text: "1" }, { c: 834, text: "5" },
  { c: 869, text: "15" }, { c: 903, text: "30" }, { c: 937, text: "60" }, { c: 972, text: "日", on: true }, { c: 1008, text: "周" },
  { c: 1042, text: "月" }, { c: 1076, text: "N" }, { c: 1111, text: "多" }, { c: 1145, text: "季" }, { c: 1180, text: "年" },
];

const Sidebar = () => (
  <Side>
    {SIDE.map((s, i) => {
      const top = i === 0 ? 35 : (SIDE[i - 1].c + s.c) / 2;
      const bottom = i === SIDE.length - 1 ? s.c + 17 : (SIDE[i + 1].c + s.c) / 2;
      return (
        <Slot key={i} $h={bottom - top} $on={s.on}>
          {s.rule ? <SideRule /> : s.icon ? ICONS[s.icon] : s.text}
        </Slot>
      );
    })}
  </Side>
);

const PanelToggleIcon = () => (
  <svg width="14" height="20" viewBox="0 0 14 20"><rect x="1" y="1" width="12" height="18" rx="2" fill="none" stroke="#8a8a8a" strokeWidth="1.5" /><rect x="7" y="4" width="4" height="12" fill="#8a8a8a" /></svg>
);
const Chevron = () => (
  <svg width="11" height="8" viewBox="0 0 11 8"><path d="M1 1 L5.5 7 L10 1" fill="none" stroke="#222" strokeWidth="1.6" /></svg>
);

const PERIODS = ["分时", "1分钟", "5分钟", "15分钟", "30分钟", "60分钟", "日线", "周线", "月线", "多周期"];
const TOOLS = ["复权", "叠加", "统计", "画线", "F10", "标记", "-自选"];
const TABS1: [string, number, string?][] = [
  ["指标", 46], ["窗口", 47], ["MACD", 63], ["VOL-TDX", 86], ["CCI", 44], ["趋势动力", 84], ["主力监控", 85], ["私募主图", 83], ["MA2", 47],
  ["测试主图", 84], ["测试幅图A", 94], ["测试幅图B", 97], ["更多", 47], ["设置", 49, "#30e0e0"],
];
const TABS2: [string, number, string?][] = [
  ["扩展∧", 61], ["关联报价", 83], ["资金分布", 85], ["综合资讯", 84, "#c8c800"], ["行业资讯", 83, "#c8c800"], ["互动问答", 85, "#c8c800"], ["新用户福利专享", 138],
];

const Sells = [["卖五", "30.06", "1.5"], ["卖四", "30.05", "6.9"], ["卖三", "30.03", "0.6"], ["卖二", "30.01", "1.5"], ["卖一", "29.98", "6.6"]];
const Buys = [["买一", "29.96", "3.9"], ["买二", "29.93", "0.3"], ["买三", "29.91", "0.9"], ["买四", "29.90", "0.3"], ["买五", "29.89", "1.8"]];
const Stats: [string, string, string, string, string, string][] = [
  ["今开", "30.57", "#c8c8c8", "均价", "29.94", "#00e000"],
  ["最高", "30.57", "#c8c8c8", "量比", "0.86", "#00e000"],
  ["最低", "29.56", "#00e000", "市值", "36.0亿", "#b8b8b8"],
  ["现量", "1", "#ee2222", "总量", "9975", "#b8b8b8"],
  ["外盘", "4236", "#ee2222", "内盘", "5739", "#00e000"],
];
const Infos: [string, string, string, string][] = [
  ["换手", "0.85%", "股本", "1.20亿"], ["净资", "3.27", "流通", "1.17亿"], ["收益(三)", "0.030", "PE(动)", "753.1"],
];
const Flows: [string, number, string, string, string][] = [
  ["净流入额", 14, "#00e000", "-452.4万", "-15%"], ["大宗流入", 2, "#e02020", "1.8万", "0%"],
  ["5日净流入额", 36, "#00e000", "-1180万", "-5%"], ["5日大宗流入", 9, "#00e000", "-297.7万", "-1%"],
];

export default function App() {
  return (
    <Root>
      <Global />
      <TitleBar>
        <LogoBox>
          <svg width="28" height="28" viewBox="0 0 28 28">
            <rect width="28" height="28" fill="#d81e1e" />
            <path d="M26 2 L10 11 L16 14 L3 27 L20 16 L14 13 Z" fill="#fff" />
          </svg>
        </LogoBox>
        <AppName>通达信金融终端</AppName>
        {["行情", "市场", "资讯", "数据", "专题", "发现", "交易", "行业", "热点", "L1L2"].map((m) => (
          <MenuItem key={m}><Mix t={m} /></MenuItem>
        ))}
        <AlertText $ml={234} $w={118}>交易未登录</AlertText>
        <AlertText $ml={0} $w={316}>路畅科技</AlertText>
        {["功能", "版面", "公式", "选项", "帮助"].map((m) => (
          <RightMenu key={m}>{m}</RightMenu>
        ))}
        <ClockCell>13:54:27<ClockDay>周二</ClockDay></ClockCell>
        <WinGroup>
          <WinBtn><svg width="14" height="22" viewBox="0 0 14 22"><path d="M11 2 L3 11 L11 20" fill="none" stroke="#333" strokeWidth="2.4" /></svg></WinBtn>
          <WinBtn><svg width="14" height="22" viewBox="0 0 14 22"><rect x="0" y="10" width="13" height="3" fill="#333" /></svg></WinBtn>
          <WinBtn><svg width="18" height="20" viewBox="0 0 18 20"><rect x="6" y="2" width="10" height="11" fill="none" stroke="#333" strokeWidth="2" /><rect x="2" y="7" width="10" height="11" fill="#f7f7f7" stroke="#333" strokeWidth="2.4" /></svg></WinBtn>
          <WinBtn><svg width="16" height="20" viewBox="0 0 16 20"><path d="M2 2 L14 18 M14 2 L2 18" stroke="#333" strokeWidth="2" /></svg></WinBtn>
        </WinGroup>
      </TitleBar>

      <Body>
        <MainCol>
          <Toolbar>
            <ToolIconCell><PanelToggleIcon /></ToolIconCell>
            <PeriodList>
              {PERIODS.map((p) => (
                <Period key={p} $on={p === "日线"}><Mix t={p} /></Period>
              ))}
              <Period><Mix t="更多" /> 〉</Period>
            </PeriodList>
            {TOOLS.map((t) => (
              <ToolBtn key={t}><Mix t={t} /></ToolBtn>
            ))}
            <ToolBtn $w={56}><Mix t="返回" /></ToolBtn>
          </Toolbar>
          <ChartHead>
            <Mix t="路畅科技 (日线)" />
            <Circle><Chevron /></Circle>
            <Mix t="上升阻力划线(89,89,10,20,69,69)" />
            <HeadGreen><Mix t="高25: 37.74 低100: 23.33" /></HeadGreen>
            <HeadIcons>
              <svg width="16" height="18" viewBox="0 0 16 18"><path d="M8 1 L15 9 L8 17 L1 9 Z" fill="none" stroke="#808080" strokeWidth="1.4" /></svg>
              <PanelToggleIcon />
            </HeadIcons>
          </ChartHead>
          <PriceChart />
          <VolumeChart />
          <VolHead>
            <VolDot><Chevron /></VolDot>
            <VolItem $w={174}>VOLUME: 9975.00<DownMark $c="#ee2222">↑</DownMark></VolItem>
            <VolItem $w={144}>MA5: 15097.07 <DownMark $c="#40a0f0">↓</DownMark></VolItem>
            <VolItem $w={150} $c="#e0e000">MA10: 16652.23 <DownMark $c="#40a0f0">↓</DownMark></VolItem>
          </VolHead>
          <ImeBox>
            <ImeBtn $w={20} $c="#900000"><ImeLetter>A</ImeLetter></ImeBtn>
            <ImeBtn $w={71}>极品五笔</ImeBtn>
            <ImeBtn $w={20}>
              <svg width="12" height="14" viewBox="0 0 12 14"><path d="M7 1 A6 6 0 1 1 1 10 A7 7 0 0 0 7 1 Z" fill="#111" /></svg>
            </ImeBtn>
            <ImeBtn $w={19}>·,</ImeBtn>
            <ImeBtn $w={20}>
              <svg width="16" height="12" viewBox="0 0 16 12"><rect x="0.5" y="0.5" width="15" height="11" fill="#c8c8c8" stroke="#777" /><path d="M2 3h12M2 6h12M2 9h12" stroke="#555" strokeDasharray="1.5 1" /></svg>
            </ImeBtn>
          </ImeBox>
          <AxisRow>
            <DateAxis />
            <PeriodCell>日线</PeriodCell>
          </AxisRow>
          <TabRow $h={26}>
            {TABS1.map(([t, w, c]) => (
              <TabCell key={t} $w={w} $c={c}><Mix t={t} /></TabCell>
            ))}
          </TabRow>
          <TabRow $h={27}>
            {TABS2.map(([t, w, c]) => (
              <TabCell key={t} $w={w} $c={c}><Mix t={t} /></TabCell>
            ))}
          </TabRow>
        </MainCol>

        <Quote>
          <NameRow>
            <StockName>路畅科技</StockName>
            <StockCode>002813</StockCode>
          </NameRow>
          <PriceRow>
            <PriceCell $w={120}>29.97</PriceCell>
            <PriceCell $w={111}><TriDown />-0.60</PriceCell>
            <PriceCell $w={100}>-1.96%</PriceCell>
          </PriceRow>
          {Sells.map(([l, p, q], i) => (
            <OrderRow key={l}>
              <Label>{l}{i === 0 && <Yen>¥</Yen>}</Label>
              <Num $c={GREEN}>{p}</Num>
              {i === 4 ? (
                <ArrowWrap><svg width="13" height="14" viewBox="0 0 13 14"><path d="M6.5 0 L13 7 H9 V14 H4 V7 H0 Z" fill="#ff0000" /></svg></ArrowWrap>
              ) : <span />}
              <Num $c={YEL}><Mix t={`${q}万`} /></Num>
              {i === 0 ? <Plus>+5</Plus> : <span />}
            </OrderRow>
          ))}
          <SplitLine />
          {Buys.map(([l, p, q]) => (
            <OrderRow key={l}>
              <Label>{l}</Label>
              <Num $c={GREEN}>{p}</Num>
              <span />
              <Num $c={YEL}><Mix t={`${q}万`} /></Num>
              <span />
            </OrderRow>
          ))}
          <Section $pt={1} $top>
            {Stats.map(([a, b, bc, c, d, dc]) => (
              <StatRow key={a} $h={28.6}>
                <Label>{a}</Label>
                <Num $c={bc} $right>{b}</Num>
                <Label2>{c}</Label2>
                <Num $c={dc} $right><Mix t={d} /></Num>
              </StatRow>
            ))}
          </Section>
          <Section $pt={2} $pb={5}>
            {Infos.map(([a, b, c, d]) => (
              <StatRow key={a} $h={28}>
                <LabelMix><Mix t={a} /></LabelMix>
                <Num $c="#b8b8b8" $right>{b}</Num>
                <LabelMix2><Mix t={c} /></LabelMix2>
                <Num $c="#b8b8b8" $right><Mix t={d} /></Num>
              </StatRow>
            ))}
          </Section>
          <Section $pt={2} $pb={3}>
            {Flows.map(([a, w, c, v, pct], i) => (
              <FlowRow key={a}>
                <LabelMix><Mix t={a} /></LabelMix>
                <FlowBar $w={w} $c={c} />
                <Num $c={i === 1 ? "#ee2222" : GREEN} $right><Mix t={v} /></Num>
                <Num $c={i === 1 ? "#ee2222" : GREEN} $right>{pct}</Num>
              </FlowRow>
            ))}
          </Section>
          <Ticks>
            {TICKS.map(([t, p, q, k, n], i) => (
              <TickRow key={i}>
                <Num $c="#b8b8b8">{t}</Num>
                <Num $c={GREEN}>{p}</Num>
                <Num $c={YEL}><Mix t={`${q}万`} /></Num>
                <Num $c={k === "B" ? RED : GREEN}>{k}</Num>
                <Num $c="#8a8a8a" $right>{n}</Num>
              </TickRow>
            ))}
          </Ticks>
        </Quote>
        <Sidebar />
      </Body>

      <Status>
        <StatusLamp />
        <StatusCell $w={56}><StatusLabel>上证</StatusLabel></StatusCell>
        <StatusCell $w={93} $c="#108a10">3247.47</StatusCell>
        <StatusCell $w={80} $c="#108a10">-21.23</StatusCell>
        <StatusCell $w={88} $c="#108a10">-0.65%</StatusCell>
        <StatusCell $w={94} $c="#222"><Mix t="3187亿" /></StatusCell>
        <StatusCell $w={55}><StatusLabel>沪深</StatusLabel></StatusCell>
        <StatusCell $w={95} $c="#108a10">3986.87</StatusCell>
        <StatusCell $w={79} $c="#108a10">-21.82</StatusCell>
        <StatusCell $w={87} $c="#108a10">-0.54%</StatusCell>
        <StatusCell $w={96} $c="#222"><Mix t="2093亿" /></StatusCell>
        <StatusCell $w={55}><StatusLabel>创业</StatusLabel></StatusCell>
        <StatusCell $w={95} $c="#108a10">2342.74</StatusCell>
        <StatusCell $w={78} $c="#108a10">-14.33</StatusCell>
        <StatusCell $w={88} $c="#108a10">-0.61%</StatusCell>
        <StatusCell $w={98} $c="#222"><Mix t="1739亿" /></StatusCell>
        <StatusDiv />
        <StatusCell $w={82}><StatusLabel>总成交</StatusLabel></StatusCell>
        <StatusCell $w={120} $c="#222">7</StatusCell>
      </Status>

      <Mark>
        <MarkTitle>公式指标网</MarkTitle>
        <MarkLogo width="82" height="81" viewBox="0 0 82 81">
          <path d="M6 44 A36 36 0 0 1 76 44" fill="none" stroke="#d8604a" strokeWidth="9" />
          <path d="M76 48 A36 36 0 0 1 41 80" fill="none" stroke="#eccb48" strokeWidth="9" />
          <path d="M6 48 A36 36 0 0 0 35 80" fill="none" stroke="#e8e8f0" strokeWidth="3" strokeDasharray="2 3" />
          <circle cx="41" cy="6" r="5" fill="none" stroke="#eccb48" strokeWidth="4" />
          <rect x="24" y="12" width="33" height="60" fill="#eccb48" />
          <path d="M24 30h12M45 30h12M24 44h12M45 44h12M24 58h10M47 58h10" stroke="#7ea8d6" strokeWidth="4" />
        </MarkLogo>
        <MarkUrl>www.9m8.cn</MarkUrl>
      </Mark>
    </Root>
  );
}
